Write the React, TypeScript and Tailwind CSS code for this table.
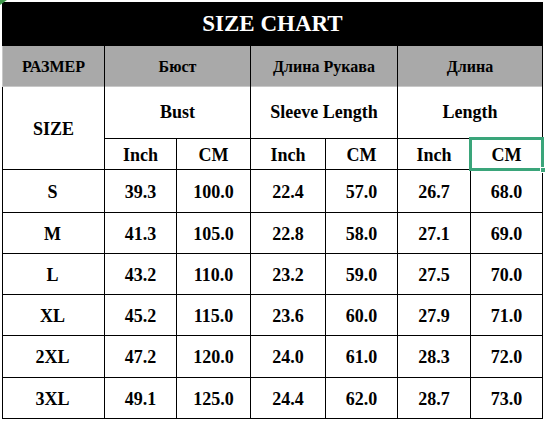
import React from "react";

const rows = [
  ["S", "39.3", "100.0", "22.4", "57.0", "26.7", "68.0"],
  ["M", "41.3", "105.0", "22.8", "58.0", "27.1", "69.0"],
  ["L", "43.2", "110.0", "23.2", "59.0", "27.5", "70.0"],
  ["XL", "45.2", "115.0", "23.6", "60.0", "27.9", "71.0"],
  ["2XL", "47.2", "120.0", "24.0", "61.0", "28.3", "72.0"],
  ["3XL", "49.1", "125.0", "24.4", "62.0", "28.7", "73.0"],
];

const cell = "bg-white flex items-center justify-center";
const grey = "relative bg-[#a9a9a9] flex items-center justify-center text-[16px] pt-[2px]";

function GreyEdge({ left = false }: { left?: boolean }) {
  return (
    <>
      <div className="absolute left-0 right-0 -bottom-px h-px bg-[#c8c8c8]" />
      {left && <div className="absolute -left-px top-0 -bottom-px w-px bg-[#c8c8c8]" />}
    </>
  );
}

export default function App() {
  return (
    <div className="relative w-[546px] h-[422px] bg-white overflow-hidden font-['Liberation_Serif','Times_New_Roman',serif]">
      <svg className="absolute left-0 top-0" width="8" height="6" viewBox="0 0 8 6">
        <polygon points="0,0 7,0 0,5" fill="#3f9a4c" />
      </svg>
      <div className="pt-[2px] pl-[2px]">
        <div className="grid w-[541px] grid-cols-[101px_71px_73px_74px_71px_72px_71px] grid-rows-[42px_40px_51px_30px_42px_40px_40px_40px_41px_40px] gap-px bg-black p-px font-bold text-black">
          <div className="col-span-7 bg-black flex items-center justify-center text-white text-[23px]">
            SIZE CHART
          </div>
          <div className={grey}>
            РАЗМЕР
            <GreyEdge left />
          </div>
          <div className={`${grey} col-span-2`}>
            Бюст
            <GreyEdge />
          </div>
          <div className={`${grey} col-span-2`}>
            Длина Рукава
            <GreyEdge />
          </div>
          <div className={`${grey} col-span-2`}>
            Длина
            <GreyEdge />
          </div>
          <div className={`${cell} row-span-2 text-[18px] pt-[3px]`}>SIZE</div>
          <div className={`${cell} col-span-2 text-[18px]`}>Bust</div>
          <div className={`${cell} col-span-2 text-[18px]`}>Sleeve Length</div>
          <div className={`${cell} col-span-2 text-[18px]`}>Length</div>
          <div className={`${cell} text-[18px] pt-[2px]`}>Inch</div>
          <div className={`${cell} text-[18px] pt-[2px]`}>CM</div>
          <div className={`${cell} text-[18px] pt-[2px]`}>Inch</div>
          <div className={`${cell} text-[18px] pt-[2px]`}>CM</div>
          <div className={`${cell} text-[18px] pt-[2px]`}>Inch</div>
          <div className={`${cell} relative text-[18px] pt-[2px]`}>
            CM
            <div className="absolute -left-[2px] -top-[2px] -right-[2px] -bottom-[2px] border-[3px] border-[#3aa57a]" />
            <div className="absolute -right-[4px] -bottom-[4px] w-[6px] h-[6px] bg-[#3aa57a] border border-white" />
          </div>
          {rows.map((r) =>
            r.map((v, i) => (
              <div key={r[0] + i} className={`${cell} text-[18px] pt-[2px] ${i === 0 ? "pr-[2px]" : ""}`}>
                {v}
              </div>
            ))
          )}
        </div>
      </div>
    </div>
  );
}
